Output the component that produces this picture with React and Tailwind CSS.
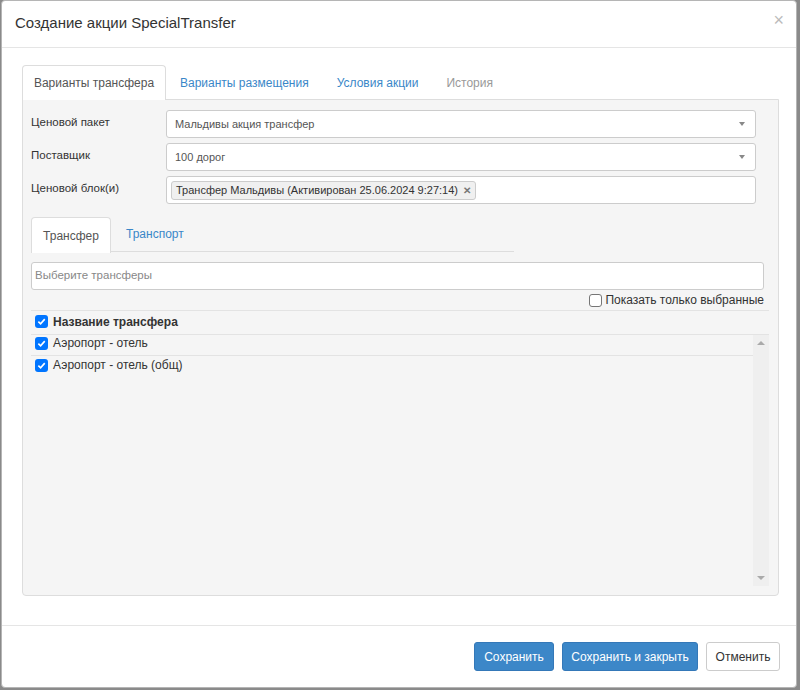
const font = { fontFamily: '"Liberation Sans", Arial, sans-serif' };

function Check({ checked = true }) {
  if (!checked) {
    return <span className="inline-block w-[13px] h-[13px] rounded-[3px] border border-[#767676] bg-white shrink-0" />;
  }
  return (
    <span className="inline-flex items-center justify-center w-[13px] h-[13px] rounded-[3px] bg-[#0075ff] shrink-0">
      <svg width="9" height="9" viewBox="0 0 10 10">
        <path d="M1.5 5.2 L4 7.6 L8.6 2.4" stroke="white" strokeWidth="1.8" fill="none" />
      </svg>
    </span>
  );
}

function Caret() {
  return <span className="w-0 h-0 border-l-[3px] border-r-[3px] border-t-[4px] border-l-transparent border-r-transparent border-t-[#888]" />;
}

function SelectRow({ label, value }) {
  return (
    <div className="flex items-center h-[28px] mb-[5px]">
      <div className="w-[135px] text-[11.5px] text-[#333] -mt-[2px]">{label}</div>
      <div className="w-[590px] h-[28px] bg-white border border-[#ccc] rounded-[3px] flex items-center justify-between pl-[8px] pr-[10px] text-[11px] text-[#555]">
        <span>{value}</span>
        <Caret />
      </div>
    </div>
  );
}

export default function App() {
  return (
    <div className="w-[800px] h-[690px] bg-[#8a8a8a] overflow-hidden" style={font}>
      <div className="ml-px w-[796px] h-[688px] bg-white rounded-[4px] border border-[#b5b5b5] flex flex-col">
        {/* header */}
        <div className="h-[47px] border-b border-[#e5e5e5] flex items-center justify-between pl-[13px] pr-[12px] shrink-0">
          <h1 className="text-[15px] text-[#333] -mt-[2px]">Создание акции SpecialTransfer</h1>
          <span className="text-[18px] text-[#bbb] leading-none -mt-[8px]">×</span>
        </div>

        {/* body */}
        <div className="flex-1 pt-[17px] pl-[20px]">
          <div className="flex h-[35px] text-[12px]">
            <div className="w-[144px] bg-white border border-[#ddd] border-b-0 rounded-t-[4px] flex items-center justify-center text-[#555] relative z-10">
              Варианты трансфера
            </div>
            <div className="px-[14px] flex items-center text-[#3a87c8]">Варианты размещения</div>
            <div className="px-[14px] flex items-center text-[#3a87c8]">Условия акции</div>
            <div className="px-[14px] flex items-center text-[#999]">История</div>
          </div>

          <div className="w-[757px] h-[497px] -mt-px bg-[#f5f5f5] border border-[#ddd] rounded-b-[4px] pt-[10px] pl-[8px]">
            <SelectRow label="Ценовой пакет" value="Мальдивы акция трансфер" />
            <SelectRow label="Поставщик" value="100 дорог" />
            <div className="flex items-center h-[28px]">
              <div className="w-[135px] text-[11.5px] text-[#333] -mt-[2px]">Ценовой блок(и)</div>
              <div className="w-[590px] h-[28px] bg-white border border-[#ccc] rounded-[3px] flex items-center pl-[4px]">
                <span className="h-[19px] flex items-center gap-[5px] px-[4px] bg-[#f0f0f0] border border-[#ccc] rounded-[3px] text-[11px] text-[#333]">
                  Трансфер Мальдивы (Активирован 25.06.2024 9:27:14)
                  <span className="text-[10px] text-[#777] font-bold">✕</span>
                </span>
              </div>
            </div>

            {/* inner tabs */}
            <div className="mt-[13px] w-[483px] flex h-[35px] border-b border-[#ddd] text-[12px]">
              <div className="w-[80px] h-[36px] bg-white border border-[#ddd] border-b-0 rounded-t-[4px] flex items-center justify-center text-[#555]">
                Трансфер
              </div>
              <div className="px-[15px] flex items-center text-[#3a87c8]">Транспорт</div>
            </div>

            <div className="mt-[10px] w-[733px] h-[28px] bg-white border border-[#ccc] rounded-[3px] flex items-center pl-[3px] text-[11.5px] text-[#888]">
              Выберите трансферы
            </div>
            <div className="w-[733px] flex justify-end items-center gap-[3px] h-[20px] text-[12px] text-[#333]">
              <Check checked={false} />
              <span>Показать только выбранные</span>
            </div>

            <div className="w-[738px] border-t border-[#e3e3e3]">
              <div className="h-[24px] flex items-center gap-[5px] pl-[4px] pb-[2px] text-[12px] font-bold text-[#333] border-b border-[#e3e3e3]">
                <Check />
                <span>Название трансфера</span>
              </div>
              <div className="flex h-[251px]">
                <div className="flex-1">
                  <div className="h-[21px] flex items-center gap-[5px] pl-[4px] pb-[4px] text-[12px] text-[#333] border-b border-[#e3e3e3]">
                    <Check />
                    <span>Аэропорт - отель</span>
                  </div>
                  <div className="h-[21px] flex items-center gap-[5px] pl-[4px] pb-[3px] text-[12px] text-[#333]">
                    <Check />
                    <span>Аэропорт - отель (общ)</span>
                  </div>
                </div>
                <div className="w-[16px] bg-[#efefef] flex flex-col items-center justify-between py-[6px]">
                  <span className="w-0 h-0 border-l-[4px] border-r-[4px] border-b-[4px] border-l-transparent border-r-transparent border-b-[#aaa]" />
                  <span className="w-0 h-0 border-l-[4px] border-r-[4px] border-t-[4px] border-l-transparent border-r-transparent border-t-[#aaa]" />
                </div>
              </div>
            </div>
          </div>
        </div>

        {/* footer */}
        <div className="h-[62px] border-t border-[#e5e5e5] flex items-center justify-end gap-[8px] pr-[16px] shrink-0">
          <button className="h-[29px] w-[80px] bg-[#3c87c8] text-white text-[12px] rounded-[3px] border border-[#3478b8]">Сохранить</button>
          <button className="h-[29px] w-[136px] bg-[#3c87c8] text-white text-[12px] rounded-[3px] border border-[#3478b8]">Сохранить и закрыть</button>
          <button className="h-[29px] w-[74px] bg-white text-[#333] text-[12px] rounded-[3px] border border-[#ccc]">Отменить</button>
        </div>
      </div>
    </div>
  );
}
